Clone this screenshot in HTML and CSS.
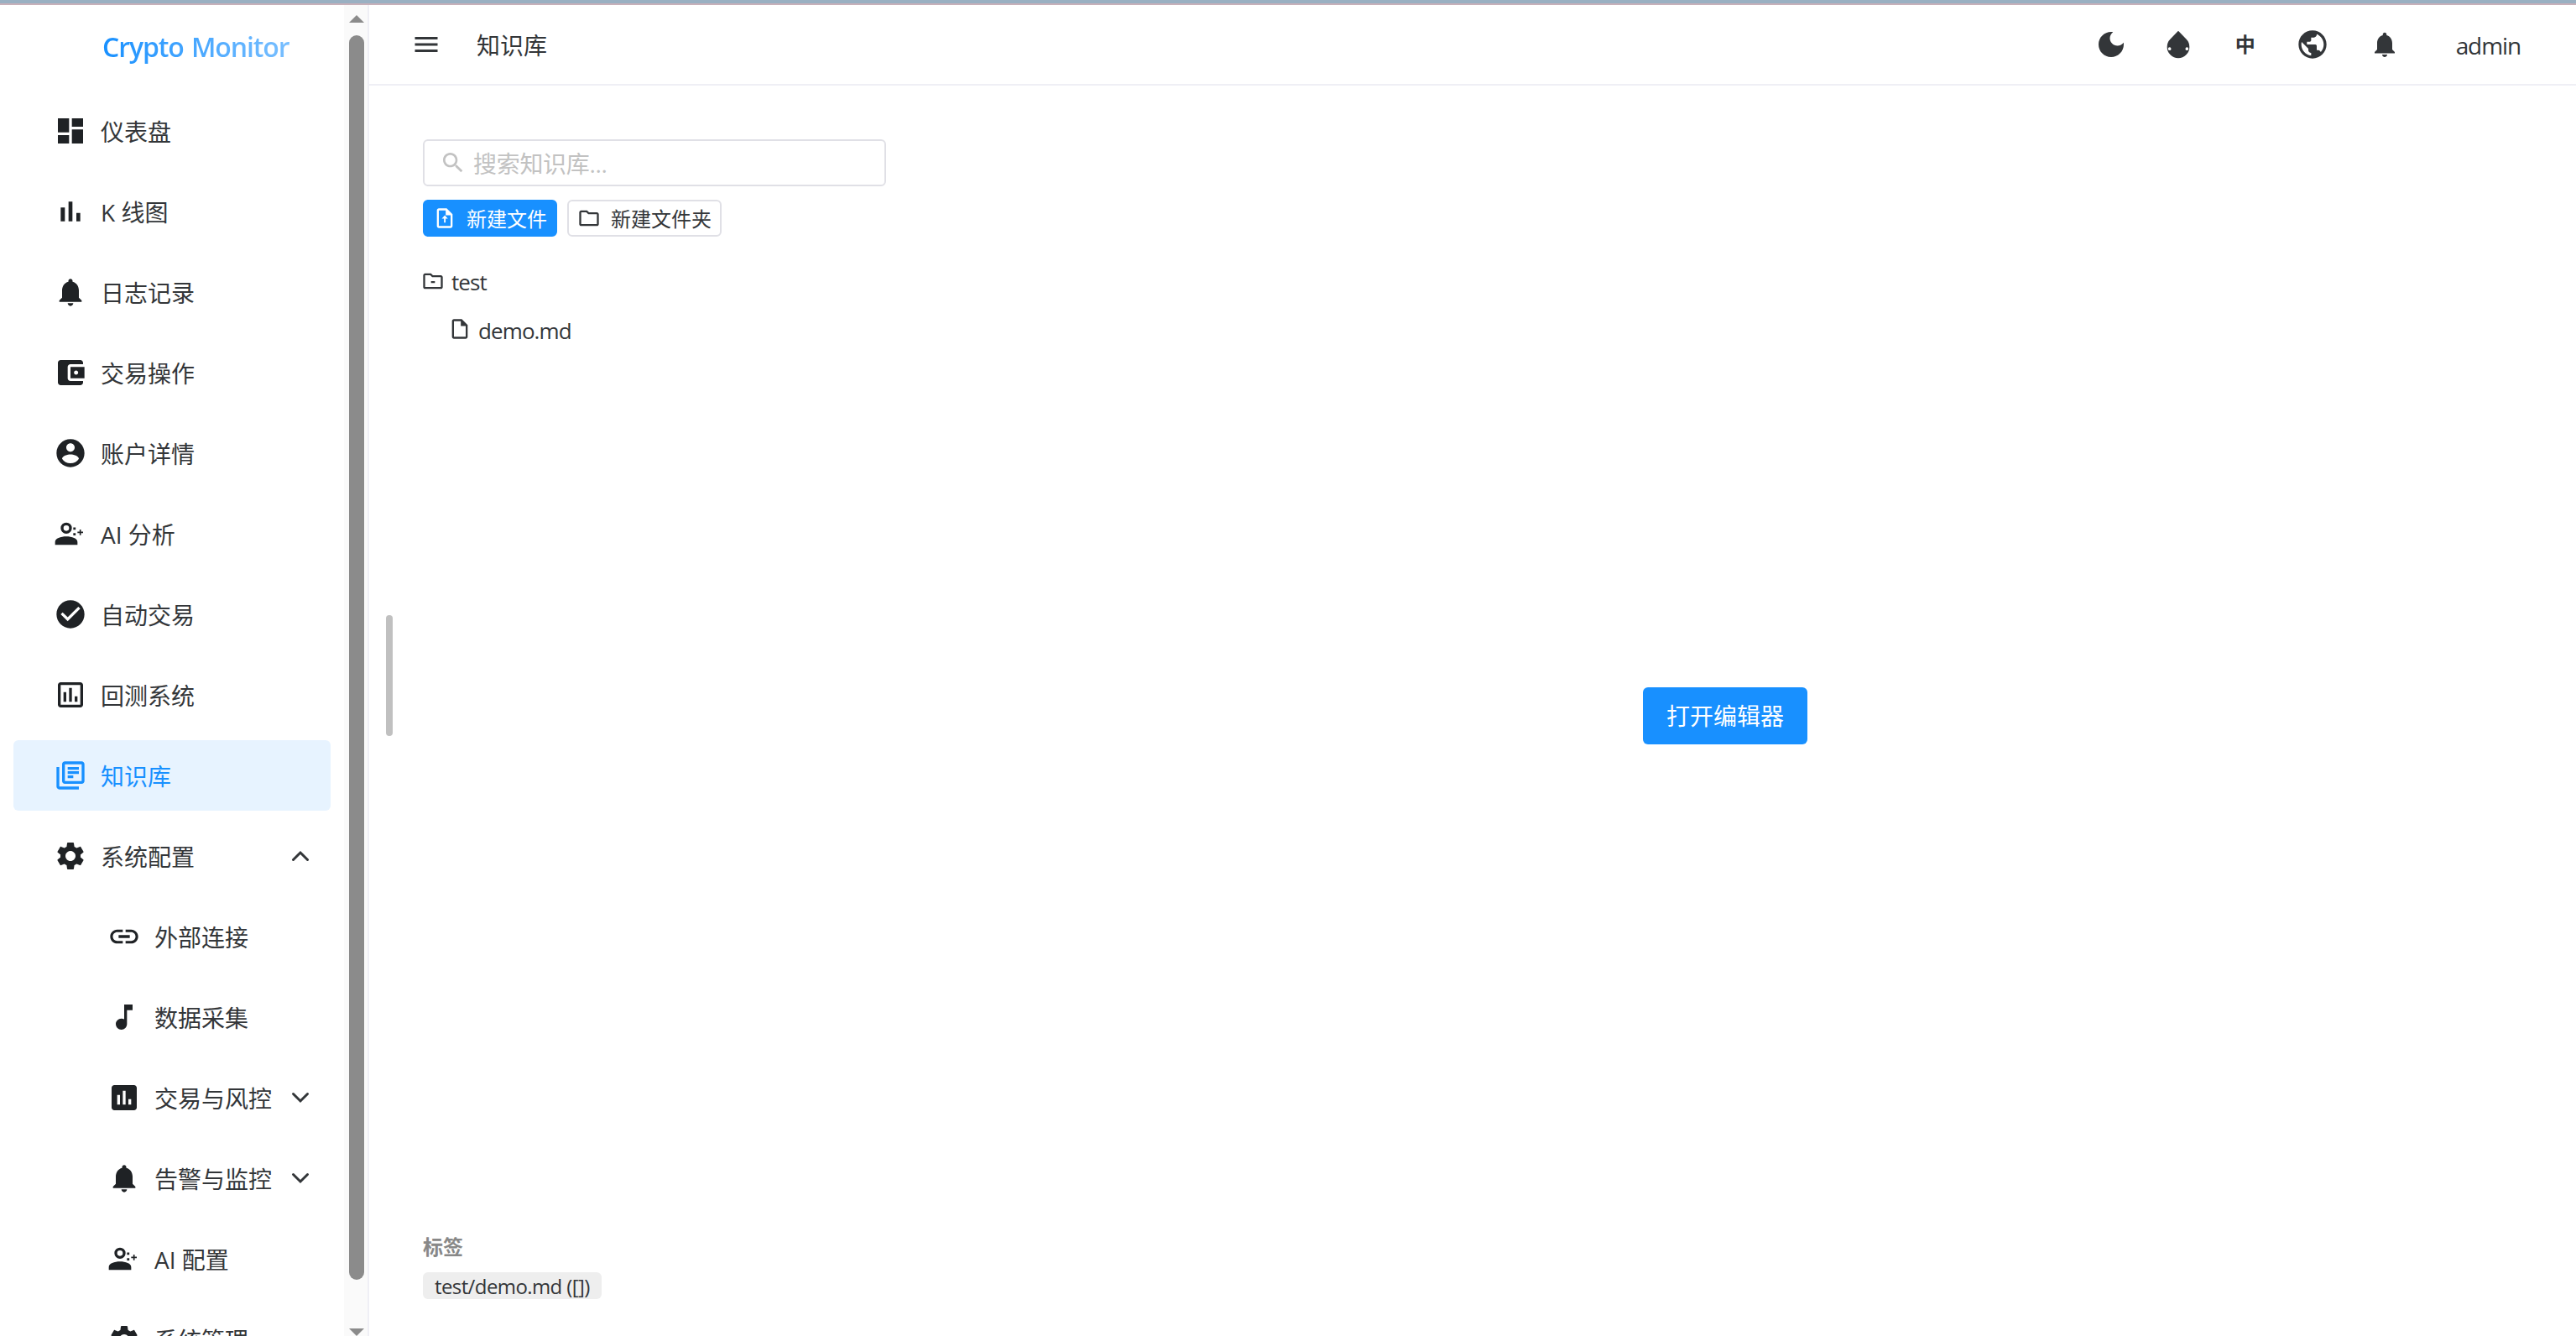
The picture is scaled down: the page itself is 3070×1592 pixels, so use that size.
FILE: index.html
```html
<!DOCTYPE html>
<html lang="zh-CN">
<head>
  <meta charset="UTF-8">
  <meta name="viewport" content="width=device-width, initial-scale=1.0">
  <title>Crypto Monitor</title>
  <link rel="stylesheet" href="styles.css">
</head>
<body>

<!-- icon set -->
<svg class="sprite" xmlns="http://www.w3.org/2000/svg">
  <symbol id="i-dashboard" viewBox="0 0 24 24"><path d="M3 13h8V3H3v10zm0 8h8v-6H3v6zm10 0h8V11h-8v10zm0-18v6h8V3h-8z"/></symbol>
  <symbol id="i-bars" viewBox="0 0 24 24"><path d="M5 9.200h3V19H5zM10.600 5h2.800v14h-2.800zm5.600 8H19v6h-2.800z"/></symbol>
  <symbol id="i-bell" viewBox="0 0 24 24"><path d="M12 22c1.100 0 2-.9 2-2h-4c0 1.100.89 2 2 2zm6-6v-5c0-3.070-1.640-5.640-4.500-6.320V4c0-.83-.67-1.500-1.500-1.500s-1.500.67-1.500 1.500v.68C7.630 5.360 6 7.920 6 11v5l-2 2v1h16v-1l-2-2z"/></symbol>
  <symbol id="i-wallet" viewBox="0 0 24 24"><path d="M21 18v1c0 1.100-.9 2-2 2H5c-1.110 0-2-.9-2-2V5c0-1.100.89-2 2-2h14c1.100 0 2 .9 2 2v1h-9c-1.110 0-2 .9-2 2v8c0 1.100.89 2 2 2h9zm-9-2h10V8H12v8zm4-2.500c-.83 0-1.500-.67-1.500-1.500s.67-1.500 1.500-1.500 1.500.67 1.500 1.500-.67 1.500-1.500 1.500z"/></symbol>
  <symbol id="i-account" viewBox="0 0 24 24"><path d="M12 2C6.480 2 2 6.480 2 12s4.480 10 10 10 10-4.480 10-10S17.520 2 12 2zm0 3c1.660 0 3 1.340 3 3s-1.340 3-3 3-3-1.340-3-3 1.340-3 3-3zm0 14.200c-2.500 0-4.710-1.280-6-3.220.03-1.990 4-3.080 6-3.080 1.990 0 5.970 1.090 6 3.080-1.290 1.940-3.500 3.220-6 3.220z"/></symbol>
  <symbol id="i-ai" viewBox="0 0 24 24"><path fill-rule="evenodd" d="M9 4a4 4 0 1 0 0 8 4 4 0 0 0 0-8zm0 2a2 2 0 1 1 0 4 2 2 0 0 1 0-4z"/><path d="M1 20v-2c0-2.700 4-4 8-4s8 1.300 8 4v2zM14 7.500h1.700v1.700H14zM14 11.500h1.700v1.700H14zM18.500 9h1v1.500H21v1h-1.500V13h-1v-1.500H17v-1h1.500z"/></symbol>
  <symbol id="i-check" viewBox="0 0 24 24"><path d="M12 2C6.480 2 2 6.480 2 12s4.480 10 10 10 10-4.480 10-10S17.520 2 12 2zm-2 15l-5-5 1.410-1.410L10 14.170l7.590-7.590L19 8l-9 9z"/></symbol>
  <symbol id="i-chart-o" viewBox="0 0 24 24"><path d="M19 3H5c-1.100 0-2 .9-2 2v14c0 1.100.9 2 2 2h14c1.100 0 2-.9 2-2V5c0-1.100-.9-2-2-2zm0 16H5V5h14v14zM7 10h2v7H7zm4-3h2v10h-2zm4 6h2v4h-2z"/></symbol>
  <symbol id="i-library" viewBox="0 0 24 24"><path d="M4 6H2v14c0 1.100.9 2 2 2h14v-2H4V6zm16-4H8c-1.100 0-2 .9-2 2v12c0 1.100.9 2 2 2h12c1.100 0 2-.9 2-2V4c0-1.100-.9-2-2-2zm0 14H8V4h12v12zM10 9h8v2h-8zm0 3h4v2h-4zm0-6h8v2h-8z"/></symbol>
  <symbol id="i-gear" viewBox="0 0 24 24"><path d="M19.140 12.940c.04-.3.06-.61.06-.94 0-.32-.02-.64-.07-.94l2.030-1.580c.18-.14.23-.41.12-.61l-1.920-3.320c-.12-.22-.37-.29-.59-.22l-2.390.96c-.5-.38-1.030-.7-1.620-.94l-.36-2.540c-.04-.24-.24-.41-.48-.41h-3.840c-.24 0-.43.17-.47.41l-.36 2.540c-.59.24-1.130.57-1.620.94l-2.390-.96c-.22-.08-.47 0-.59.22L2.740 8.870c-.12.21-.08.47.12.61l2.030 1.580c-.05.3-.09.63-.09.94s.02.64.07.94l-2.030 1.580c-.18.14-.23.41-.12.61l1.920 3.320c.12.22.37.29.59.22l2.390-.96c.5.38 1.030.7 1.620.94l.36 2.540c.05.24.24.41.48.41h3.840c.24 0 .44-.17.47-.41l.36-2.540c.59-.24 1.130-.56 1.620-.94l2.390.96c.22.08.47 0 .59-.22l1.920-3.320c.12-.22.07-.47-.12-.61l-2.010-1.580zM12 15.600c-1.980 0-3.600-1.620-3.600-3.600s1.620-3.600 3.600-3.600 3.600 1.620 3.600 3.600-1.620 3.600-3.600 3.600z"/></symbol>
  <symbol id="i-link" viewBox="0 0 24 24"><path d="M3.900 12c0-1.710 1.390-3.100 3.100-3.100h4V7H7c-2.760 0-5 2.240-5 5s2.240 5 5 5h4v-1.900H7c-1.710 0-3.100-1.390-3.100-3.100zM8 13h8v-2H8v2zm9-6h-4v1.900h4c1.710 0 3.100 1.390 3.100 3.100s-1.390 3.100-3.100 3.100h-4V17h4c2.760 0 5-2.240 5-5s-2.240-5-5-5z"/></symbol>
  <symbol id="i-note" viewBox="0 0 24 24"><path d="M12 3v10.550c-.59-.34-1.270-.55-2-.55-2.210 0-4 1.790-4 4s1.790 4 4 4 4-1.790 4-4V7h4V3h-6z"/></symbol>
  <symbol id="i-chart" viewBox="0 0 24 24"><path d="M19 3H5c-1.100 0-2 .9-2 2v14c0 1.100.9 2 2 2h14c1.100 0 2-.9 2-2V5c0-1.100-.9-2-2-2zM9 17H7v-7h2v7zm4 0h-2V7h2v10zm4 0h-2v-4h2v4z"/></symbol>
  <symbol id="i-menu" viewBox="0 0 24 24"><path d="M3 18h18v-2H3v2zm0-5h18v-2H3v2zm0-7v2h18V6H3z"/></symbol>
  <symbol id="i-moon" viewBox="0 0 24 24"><path d="M12 3c-4.970 0-9 4.030-9 9s4.030 9 9 9 9-4.030 9-9c0-.46-.04-.92-.1-1.360-.98 1.370-2.580 2.260-4.400 2.260-2.980 0-5.400-2.420-5.400-5.400 0-1.810.89-3.420 2.260-4.400-.44-.06-.9-.1-1.360-.1z"/></symbol>
  <symbol id="i-drop" viewBox="0 0 24 24"><path fill-rule="evenodd" d="M12 2.300L6.340 8.100A8 8 0 1 0 17.660 8.100zM5.800 14a1.100 1.100 0 1 1 0 2.200 1.100 1.100 0 0 1 0-2.200zm12.400 0a1.100 1.100 0 1 1 0 2.200 1.100 1.100 0 0 1 0-2.200z"/></symbol>
  <symbol id="i-globe" viewBox="0 0 24 24"><path d="M12 2C6.480 2 2 6.480 2 12s4.480 10 10 10 10-4.480 10-10S17.520 2 12 2zm-1 17.930c-3.950-.49-7-3.850-7-7.930 0-.62.08-1.210.21-1.790L9 15v1c0 1.100.9 2 2 2v1.930zm6.900-2.540c-.26-.81-1-1.390-1.900-1.390h-1v-3c0-.55-.45-1-1-1H8v-2h2c.55 0 1-.45 1-1V7h2c1.100 0 2-.9 2-2v-.41c2.930 1.190 5 4.060 5 7.410 0 2.080-.8 3.970-2.100 5.390z"/></symbol>
  <symbol id="i-search" viewBox="0 0 24 24"><path d="M15.500 14h-.79l-.28-.27C15.410 12.590 16 11.110 16 9.500 16 5.910 13.090 3 9.500 3S3 5.910 3 9.500 5.910 16 9.500 16c1.610 0 3.090-.59 4.230-1.570l.27.28v.79l5 4.990L20.490 19l-4.990-5zm-6 0C7.010 14 5 11.990 5 9.500S7.010 5 9.500 5 14 7.010 14 9.500 11.990 14 9.500 14z"/></symbol>
  <symbol id="i-file" viewBox="0 0 24 24"><path d="M14 2H6c-1.100 0-2 .9-2 2v16c0 1.100.89 2 1.990 2H18c1.100 0 2-.9 2-2V8l-6-6zM6 20V4h7v5h5v11H6z"/></symbol>
  <symbol id="i-file-up" viewBox="0 0 24 24"><path d="M14 2H6c-1.100 0-2 .9-2 2v16c0 1.100.89 2 1.990 2H18c1.100 0 2-.9 2-2V8l-6-6zM6 20V4h7v5h5v11H6zM11.300 16.500h1.600v-4h2.300l-3.100-3.400L9 12.500h2.300z"/></symbol>
  <symbol id="i-folder" viewBox="0 0 24 24"><path d="M9.170 6l2 2H20v10H4V6h5.170M10 4H4c-1.100 0-1.990.9-1.990 2L2 18c0 1.100.9 2 2 2h16c1.100 0 2-.9 2-2V8c0-1.100-.9-2-2-2h-8l-2-2z"/></symbol>
  <symbol id="i-folder-open" viewBox="0 0 24 24"><path d="M9.170 6l2 2H20v10H4V6h5.170M10 4H4c-1.100 0-1.990.9-1.990 2L2 18c0 1.100.9 2 2 2h16c1.100 0 2-.9 2-2V8c0-1.100-.9-2-2-2h-8l-2-2zM10 12h4v2h-4z"/></symbol>
  <symbol id="i-chevron" viewBox="0 0 24 24"><path d="M3.500 7.500L12 16L20.500 7.500" fill="none" stroke="currentColor" stroke-width="3" stroke-linecap="round"/></symbol>
</svg>

<div class="window-edge"></div>
<div class="layout">
  <aside class="sider">
    <div class="sider-content">
      <div class="logo"><span>Crypto Monitor</span></div>
      <ul class="menu">
        <li class="item"><svg><use href="#i-dashboard"/></svg><span>仪表盘</span></li>
        <li class="item"><svg><use href="#i-bars"/></svg><span>K 线图</span></li>
        <li class="item"><svg><use href="#i-bell"/></svg><span>日志记录</span></li>
        <li class="item"><svg><use href="#i-wallet"/></svg><span>交易操作</span></li>
        <li class="item"><svg><use href="#i-account"/></svg><span>账户详情</span></li>
        <li class="item"><svg><use href="#i-ai"/></svg><span>AI 分析</span></li>
        <li class="item"><svg><use href="#i-check"/></svg><span>自动交易</span></li>
        <li class="item"><svg><use href="#i-chart-o"/></svg><span>回测系统</span></li>
        <li class="item active"><svg><use href="#i-library"/></svg><span>知识库</span></li>
        <li class="item"><svg><use href="#i-gear"/></svg><span>系统配置</span><svg class="arrow up"><use href="#i-chevron"/></svg></li>
        <li class="item sub"><svg><use href="#i-link"/></svg><span>外部连接</span></li>
        <li class="item sub"><svg><use href="#i-note"/></svg><span>数据采集</span></li>
        <li class="item sub"><svg><use href="#i-chart"/></svg><span>交易与风控</span><svg class="arrow"><use href="#i-chevron"/></svg></li>
        <li class="item sub"><svg><use href="#i-bell"/></svg><span>告警与监控</span><svg class="arrow"><use href="#i-chevron"/></svg></li>
        <li class="item sub"><svg><use href="#i-ai"/></svg><span>AI 配置</span></li>
        <li class="item sub"><svg><use href="#i-gear"/></svg><span>系统管理</span></li>
      </ul>
    </div>
    <div class="scrollbar">
      <div class="scroll-up"></div>
      <div class="thumb"></div>
      <div class="scroll-down"></div>
    </div>
  </aside>

  <div class="main">
    <header class="header">
      <svg class="menu-btn"><use href="#i-menu"/></svg>
      <span class="title">知识库</span>
      <div class="actions">
        <svg class="moon"><use href="#i-moon"/></svg>
        <svg class="drop"><use href="#i-drop"/></svg>
        <span class="lang">中</span>
        <svg class="globe"><use href="#i-globe"/></svg>
        <svg class="bell"><use href="#i-bell"/></svg>
        <span class="user">admin</span>
      </div>
    </header>

    <div class="content">
      <div class="sash"></div>
      <section class="files">
        <label class="search">
          <svg><use href="#i-search"/></svg>
          <span>搜索知识库...</span>
        </label>
        <div class="buttons">
          <button class="btn primary"><svg><use href="#i-file-up"/></svg><span>新建文件</span></button>
          <button class="btn"><svg><use href="#i-folder"/></svg><span>新建文件夹</span></button>
        </div>
        <div class="tree">
          <div class="node"><svg><use href="#i-folder-open"/></svg><span>test</span></div>
          <div class="node child"><svg><use href="#i-file"/></svg><span>demo.md</span></div>
        </div>
        <div class="tags">
          <div class="tags-title">标签</div>
          <span class="tag">test/demo.md ([])</span>
        </div>
      </section>
      <section class="editor">
        <button class="open-btn">打开编辑器</button>
      </section>
    </div>
  </div>
</div>

</body>
</html>
```

FILE: styles.css
```css
* {
  box-sizing: border-box;
}

body {
  margin: 0;
  height: 100vh;
  overflow: hidden;
  display: flex;
  flex-direction: column;
  font-family: "Open Sans", "Noto Sans CJK SC", sans-serif;
  font-size: 28px;
  line-height: 40px;
  color: #333639;
  background: #fff;
}

svg {
  fill: currentColor;
  flex: none;
}

.sprite {
  display: none;
}

.window-edge {
  flex: none;
  height: 6px;
  background: #9ab0c2;
  border-bottom: 2px solid #c7b0b9;
}

.layout {
  flex: 1;
  min-height: 0;
  display: flex;
}

/* sidebar */
.sider {
  width: 440px;
  display: flex;
  border-right: 2px solid #efeff5;
}

.sider-content {
  width: 410px;
  overflow: hidden;
}

.logo {
  height: 96px;
  padding: 30px 0 0 122px;
  font-size: 32px;
  font-weight: 600;
  letter-spacing: -1.1px;
  word-spacing: 2px;
  white-space: nowrap;
}

.logo span {
  background: linear-gradient(90deg, #1890ff, #79bfff);
  -webkit-background-clip: text;
  background-clip: text;
  color: transparent;
}

.menu {
  list-style: none;
  margin: 0;
  padding: 12px 16px;
  display: flex;
  flex-direction: column;
  gap: 12px;
}

.item {
  height: 84px;
  flex: none;
  display: flex;
  align-items: center;
  gap: 16px;
  padding: 0 26px 0 48px;
  border-radius: 6px;
  white-space: nowrap;
}

.item span {
  padding-top: 2px;
}

.item svg {
  width: 40px;
  height: 40px;
  color: #1f2225;
}

.item.sub {
  padding-left: 112px;
}

.item.active {
  background: #e7f3ff;
}

.item.active,
.item.active svg {
  color: #1890ff;
}

.item svg.arrow {
  width: 24px;
  height: 24px;
  margin-left: auto;
  margin-right: -2px;
  color: #333639;
}

.arrow.up {
  transform: rotate(180deg);
}

.scrollbar {
  width: 28px;
  padding: 12px 4px 0 6px;
  background: #fafafa;
  display: flex;
  flex-direction: column;
}

.scroll-up,
.scroll-down {
  height: 9px;
  background: #8b8b8b;
  clip-path: polygon(50% 0, 100% 100%, 0 100%);
}

.scroll-down {
  margin-top: auto;
  transform: rotate(180deg);
}

.thumb {
  height: 1483px;
  margin-top: 15px;
  border-radius: 9px;
  background: #8b8b8b;
}

/* header */
.main {
  flex: 1;
  display: flex;
  flex-direction: column;
}

.header {
  height: 96px;
  display: flex;
  align-items: center;
  padding: 0 66px 0 50px;
  border-bottom: 2px solid #efeff5;
}

.menu-btn {
  width: 36px;
  height: 36px;
}

.title {
  margin-left: 42px;
  padding-top: 2px;
}

.actions {
  margin-left: auto;
  display: flex;
  align-items: center;
}

.moon,
.drop,
.globe {
  width: 40px;
  height: 40px;
}

.drop {
  margin-left: 40px;
}

.lang {
  width: 24px;
  margin: 0 48px;
  font-size: 24px;
  font-weight: 700;
}

.bell {
  width: 36px;
  height: 36px;
  margin: 0 67px 0 48px;
}

.user {
  padding-top: 2px;
  letter-spacing: -1.1px;
}

/* content */
.content {
  flex: 1;
  display: flex;
}

.sash {
  width: 8px;
  height: 144px;
  margin: 631px 36px 0 20px;
  border-radius: 4px;
  background: #c0c0c0;
}

.files {
  width: 552px;
  padding: 64px 0 44px;
  display: flex;
  flex-direction: column;
}

.search {
  height: 56px;
  display: flex;
  align-items: center;
  padding-left: 18px;
  gap: 8px;
  border: 2px solid #e0e0e6;
  border-radius: 6px;
  color: #c2c2c2;
}

.search svg {
  width: 32px;
  height: 32px;
}

.search span {
  padding-top: 1px;
  letter-spacing: -0.3px;
}

.buttons {
  display: flex;
  gap: 12px;
  margin-top: 16px;
}

.btn {
  height: 44px;
  display: flex;
  align-items: center;
  gap: 12px;
  padding: 0 10px;
  font: inherit;
  font-size: 24px;
  line-height: 40px;
  color: inherit;
  background: #fff;
  border: 2px solid #e0e0e6;
  border-radius: 6px;
  white-space: nowrap;
}

.btn span {
  padding-top: 2px;
}

.btn svg {
  width: 28px;
  height: 28px;
}

.btn.primary {
  color: #fff;
  background: #1890ff;
  border-color: #1890ff;
}

.tree {
  margin-top: 24px;
  font-size: 26px;
  letter-spacing: -0.9px;
}

.node {
  height: 58px;
  display: flex;
  align-items: center;
  gap: 8px;
  margin-left: -2px;
}

.node span {
  padding-top: 1px;
}

.node svg {
  width: 28px;
  height: 28px;
}

.node.child {
  margin-left: 30px;
}

.node.child svg {
  margin-top: -2px;
}

.tags {
  margin-top: auto;
  font-size: 24px;
}

.tags-title {
  font-weight: 700;
  color: #888;
  margin-bottom: 10px;
}

.tag {
  display: block;
  width: fit-content;
  height: 32px;
  line-height: 34px;
  padding: 0 14px;
  border-radius: 6px;
  background: #eee;
  letter-spacing: -0.6px;
}

.editor {
  flex: 1;
  display: flex;
  align-items: flex-start;
  padding: 717px 0 0 902px;
}

.open-btn {
  width: 196px;
  height: 68px;
  padding: 0;
  font: inherit;
  color: #fff;
  background: #1890ff;
  border: none;
  border-radius: 6px;
}
```
